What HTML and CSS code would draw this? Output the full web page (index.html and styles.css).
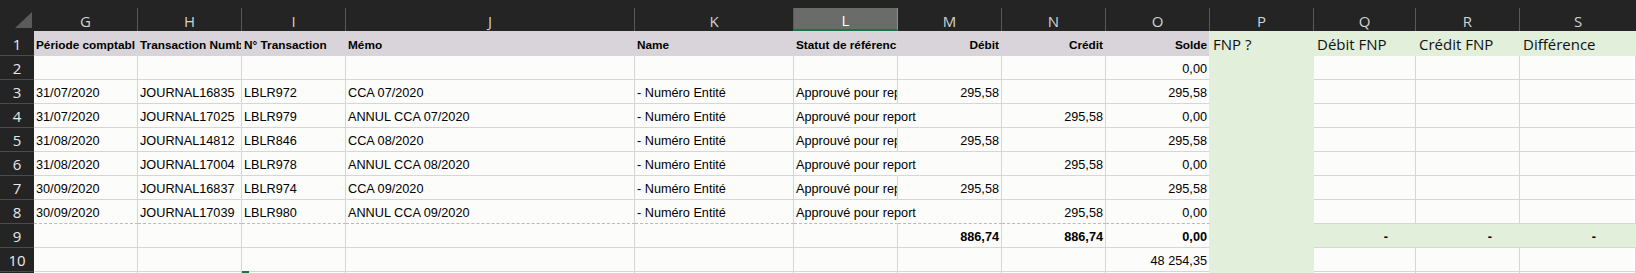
FILE: index.html
```html
<!DOCTYPE html>
<html lang="fr">
<head>
<meta charset="utf-8">
<title>Feuille</title>
<link rel="stylesheet" href="styles.css">
</head>
<body>
<div class="sheet">
  <div class="topbar"></div>

  <div class="corner"><svg width="34" height="23" viewBox="0 0 34 23"><polygon points="32,4 32,20 15,20" fill="#5a5b5a"/></svg></div>
  <div class="colh">G</div>
  <div class="colh">H</div>
  <div class="colh">I</div>
  <div class="colh">J</div>
  <div class="colh">K</div>
  <div class="colh sel">L</div>
  <div class="colh">M</div>
  <div class="colh">N</div>
  <div class="colh">O</div>
  <div class="colh">P</div>
  <div class="colh">Q</div>
  <div class="colh">R</div>
  <div class="colh last">S</div>

  <div class="rowh">1</div>
  <div class="c hd">Période comptabl</div>
  <div class="c hd">Transaction Numb</div>
  <div class="c hd">N° Transaction</div>
  <div class="c hd">Mémo</div>
  <div class="c hd">Name</div>
  <div class="c hd">Statut de référenc</div>
  <div class="c hd r">Débit</div>
  <div class="c hd r">Crédit</div>
  <div class="c hd r edge">Solde</div>
  <div class="c p fh">FNP ?</div>
  <div class="c g fh">Débit FNP</div>
  <div class="c g fh">Crédit FNP</div>
  <div class="c g fh">Différence</div>

  <div class="rowh">2</div>
  <div class="c"></div><div class="c"></div><div class="c"></div><div class="c"></div><div class="c"></div><div class="c"></div><div class="c"></div><div class="c"></div>
  <div class="c r edge">0,00</div>
  <div class="c p"></div><div class="c"></div><div class="c"></div><div class="c"></div>

  <div class="rowh">3</div>
  <div class="c">31/07/2020</div>
  <div class="c">JOURNAL16835</div>
  <div class="c">LBLR972</div>
  <div class="c">CCA 07/2020</div>
  <div class="c">- Numéro Entité</div>
  <div class="c">Approuvé pour rep</div>
  <div class="c r">295,58</div>
  <div class="c r"></div>
  <div class="c r edge">295,58</div>
  <div class="c p"></div><div class="c"></div><div class="c"></div><div class="c"></div>

  <div class="rowh">4</div>
  <div class="c">31/07/2020</div>
  <div class="c">JOURNAL17025</div>
  <div class="c">LBLR979</div>
  <div class="c">ANNUL CCA 07/2020</div>
  <div class="c">- Numéro Entité</div>
  <div class="c spill">Approuvé pour report</div>
  <div class="c r"></div>
  <div class="c r">295,58</div>
  <div class="c r edge">0,00</div>
  <div class="c p"></div><div class="c"></div><div class="c"></div><div class="c"></div>

  <div class="rowh">5</div>
  <div class="c">31/08/2020</div>
  <div class="c">JOURNAL14812</div>
  <div class="c">LBLR846</div>
  <div class="c">CCA 08/2020</div>
  <div class="c">- Numéro Entité</div>
  <div class="c">Approuvé pour rep</div>
  <div class="c r">295,58</div>
  <div class="c r"></div>
  <div class="c r edge">295,58</div>
  <div class="c p"></div><div class="c"></div><div class="c"></div><div class="c"></div>

  <div class="rowh">6</div>
  <div class="c">31/08/2020</div>
  <div class="c">JOURNAL17004</div>
  <div class="c">LBLR978</div>
  <div class="c">ANNUL CCA 08/2020</div>
  <div class="c">- Numéro Entité</div>
  <div class="c spill">Approuvé pour report</div>
  <div class="c r"></div>
  <div class="c r">295,58</div>
  <div class="c r edge">0,00</div>
  <div class="c p"></div><div class="c"></div><div class="c"></div><div class="c"></div>

  <div class="rowh">7</div>
  <div class="c">30/09/2020</div>
  <div class="c">JOURNAL16837</div>
  <div class="c">LBLR974</div>
  <div class="c">CCA 09/2020</div>
  <div class="c">- Numéro Entité</div>
  <div class="c">Approuvé pour rep</div>
  <div class="c r">295,58</div>
  <div class="c r"></div>
  <div class="c r edge">295,58</div>
  <div class="c p"></div><div class="c"></div><div class="c"></div><div class="c"></div>

  <div class="rowh">8</div>
  <div class="c pb">30/09/2020</div>
  <div class="c pb">JOURNAL17039</div>
  <div class="c pb">LBLR980</div>
  <div class="c pb">ANNUL CCA 09/2020</div>
  <div class="c pb">- Numéro Entité</div>
  <div class="c pb spill">Approuvé pour report</div>
  <div class="c pb r"></div>
  <div class="c pb r">295,58</div>
  <div class="c pb r edge">0,00</div>
  <div class="c p"></div><div class="c"></div><div class="c"></div><div class="c"></div>

  <div class="rowh">9</div>
  <div class="c"></div><div class="c"></div><div class="c"></div><div class="c"></div><div class="c"></div><div class="c"></div>
  <div class="c r b">886,74</div>
  <div class="c r b">886,74</div>
  <div class="c r b edge">0,00</div>
  <div class="c p"></div>
  <div class="c g gb r b dash">-</div>
  <div class="c g gb r b dash">-</div>
  <div class="c g gb r b dash dash-s">-</div>

  <div class="rowh">10</div>
  <div class="c"></div><div class="c"></div><div class="c"></div><div class="c"></div><div class="c"></div><div class="c"></div><div class="c"></div><div class="c"></div>
  <div class="c r edge">48 254,35</div>
  <div class="c p"></div><div class="c"></div><div class="c"></div><div class="c"></div>

  <div class="rowh">11</div>
  <div class="c"></div><div class="c"></div><div class="c"></div><div class="c"></div><div class="c"></div><div class="c"></div><div class="c"></div><div class="c"></div>
  <div class="c edge"></div>
  <div class="c p"></div><div class="c"></div><div class="c"></div><div class="c"></div>

  <div class="handle"></div>
</div>
</body>
</html>
```

FILE: styles.css
```css
html, body {
  margin: 0;
  padding: 0;
}

body {
  width: 1636px;
  height: 273px;
  overflow: hidden;
  background: #232423;
}

.sheet {
  position: relative;
  display: grid;
  grid-template-columns: 34px 104px 104px 104px 289px 159px 104px 104px 104px 104px 104px 102px 104px 1fr;
  grid-template-rows: 8px 23px 25px repeat(9, 24px) 24px;
  width: 1636px;
  height: 273px;
  overflow: hidden;
}

.topbar {
  grid-column: 1 / -1;
  background: #232423;
}

.corner {
  background: #232423;
  display: flex;
}

.colh {
  box-sizing: border-box;
  background: #232423;
  border-right: 1px solid #585958;
  color: #d2d4d2;
  font: 15px "Open Sans", "Noto Sans", sans-serif;
  display: flex;
  align-items: center;
  justify-content: center;
  padding-top: 2px;
}

.colh.last {
  border-right: none;
}

.colh.sel {
  background: #6a6c69;
  border-right-color: #8e908d;
  border-bottom: 2px solid #1e7145;
  color: #ffffff;
  padding-top: 3px;
}

.rowh {
  box-sizing: border-box;
  background: #232423;
  border-bottom: 1px solid #4a4b4a;
  color: #e8e8e8;
  font: 15px "Open Sans", "Noto Sans", sans-serif;
  display: flex;
  align-items: center;
  justify-content: center;
  padding-top: 1px;
}

.c {
  box-sizing: border-box;
  background: #fcfdfb;
  border-right: 1px solid #d5d6d5;
  border-bottom: 1px solid #d5d6d5;
  color: #000;
  font: 12.7px "Liberation Sans", Arial, sans-serif;
  line-height: 14px;
  display: flex;
  align-items: flex-end;
  padding: 0 2px 3px;
  white-space: nowrap;
  overflow: hidden;
  min-width: 0;
}

.c.r {
  justify-content: flex-end;
}

.c.b {
  font-weight: bold;
}

.c.hd {
  background: #d8d4d9;
  border-right-color: #d8d4d9;
  border-bottom-color: #d8d4d9;
  font-weight: bold;
  font-size: 11.8px;
  padding-bottom: 3px;
}

.c.edge {
  border-right-color: #e2efda;
}

.c.p {
  background: #e2efda;
  border-right-color: #e2efda;
  border-bottom-color: #e2efda;
}

.c.g {
  background: #e2efda;
  border-right-color: #e2efda;
  border-bottom-color: #e2efda;
}

.c.g.gb {
  border-bottom-color: #d5d6d5;
}

.c.fh {
  font: 15px "Open Sans", "Noto Sans", sans-serif;
  line-height: 14px;
  padding: 0 3px 4px;
  color: #111;
}

.c.pb {
  border-bottom: 1px dashed #b9bab9;
}

.c.spill {
  overflow: visible;
  position: relative;
  z-index: 1;
  border-right-color: #fcfdfb;
}

.c.dash {
  padding-right: 27px;
}

.c.dash-s {
  padding-right: 39px;
}

.handle {
  position: absolute;
  left: 242px;
  top: 271px;
  width: 7px;
  height: 2px;
  background: #1e7145;
}
```
